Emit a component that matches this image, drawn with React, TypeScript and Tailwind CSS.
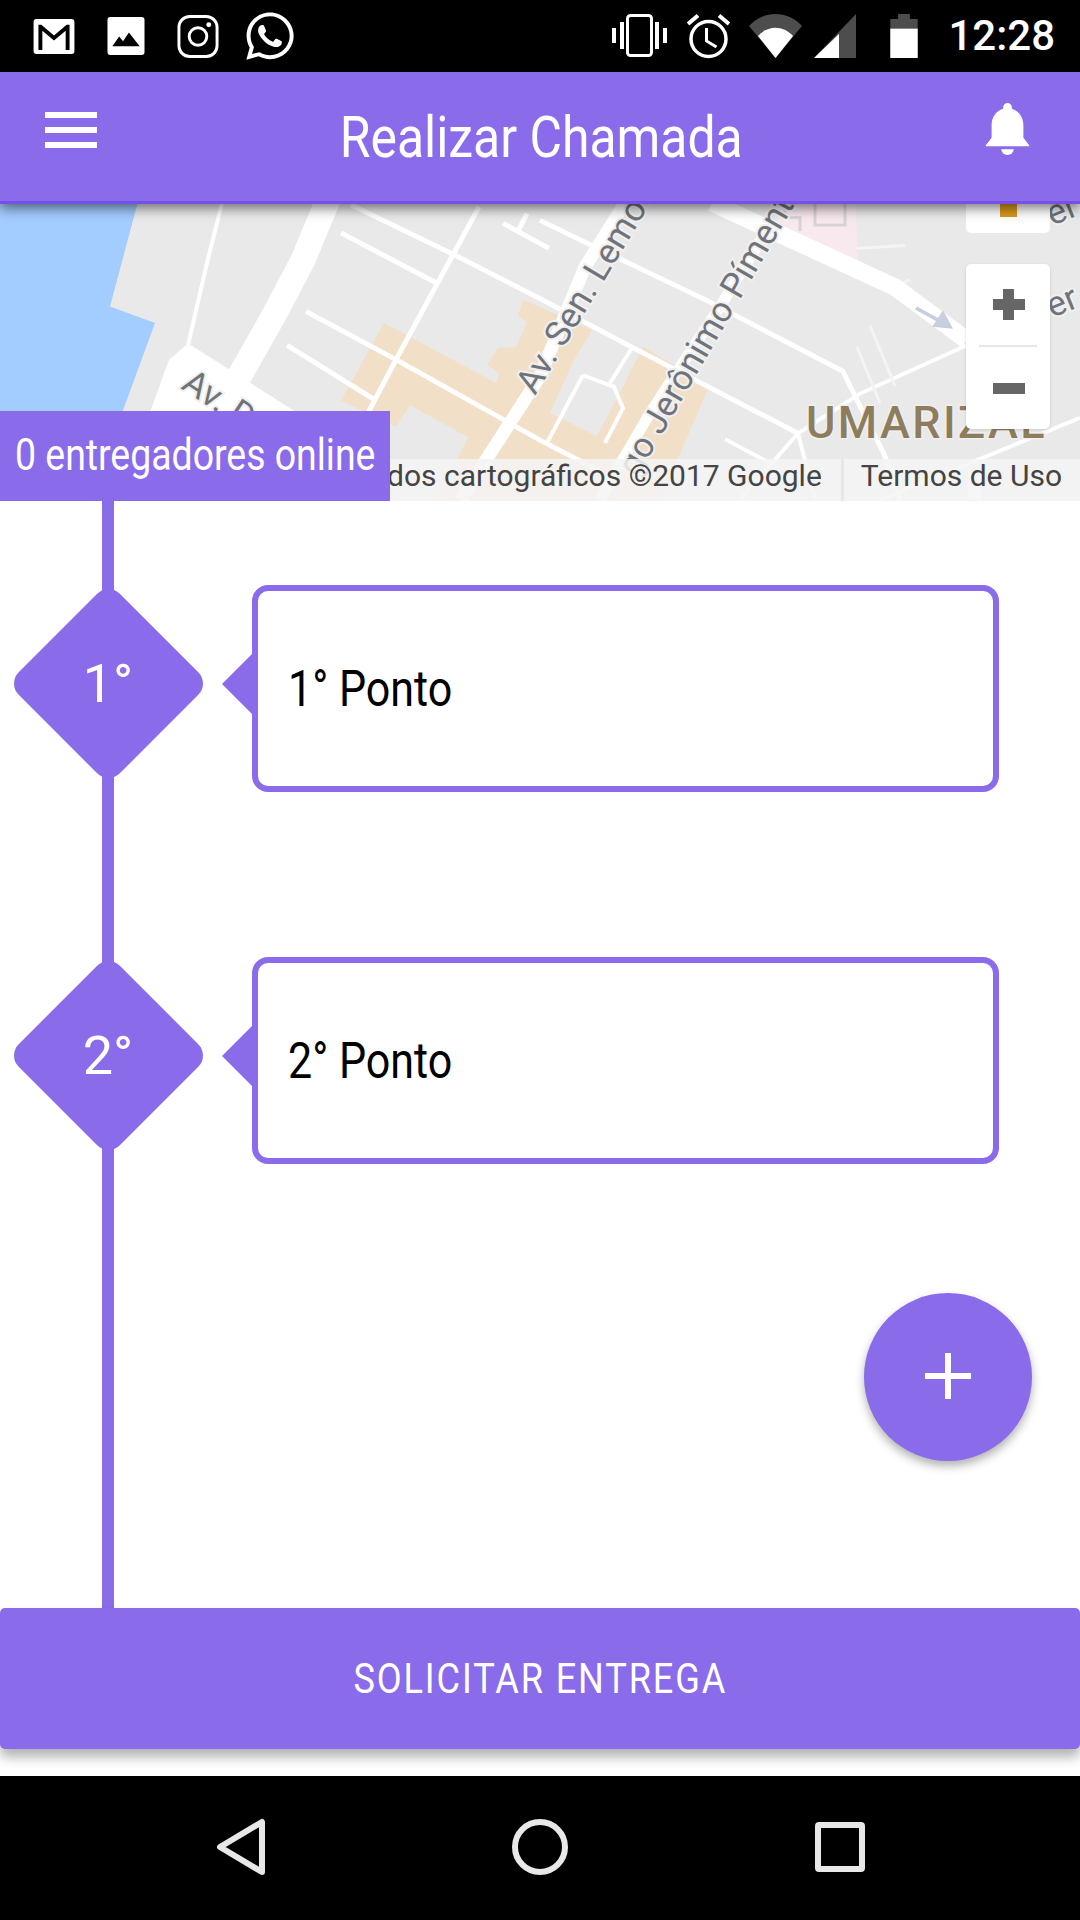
import { FaWhatsapp } from "react-icons/fa";

const ROBOTO = "font-['Roboto',sans-serif]";

function StatusLeft() {
  return (
    <div className="flex items-center">
      <svg className="ml-[33px]" width="42" height="35" viewBox="0 0 42 36">
        <rect width="42" height="36" rx="3" fill="#fff" />
        <path d="M5 32V6h3l13 11L34 6h3v26h-4V12L21 22 9 12v20z" fill="#000" />
      </svg>
      <svg className="ml-[32px]" width="38" height="38" viewBox="0 0 38 39">
        <rect width="38" height="39" rx="3" fill="#fff" />
        <path d="M5 30l7-10 4 5 6-9 11 14z" fill="#000" />
      </svg>
      <svg className="ml-[32px]" width="42" height="43" viewBox="0 0 42 44" fill="none" stroke="#fff">
        <rect x="1.500" y="1.500" width="39" height="41" rx="11" strokeWidth="3" />
        <circle cx="21" cy="22" r="9" strokeWidth="3" />
        <circle cx="32" cy="10" r="2.500" fill="#fff" stroke="none" />
      </svg>
      <FaWhatsapp className="ml-[24px] text-white" size={54} />
    </div>
  );
}

function StatusRight() {
  return (
    <div className="flex items-center">
      <svg width="55" height="44" viewBox="0 0 55 44" fill="#fff">
        <rect x="0" y="14" width="4" height="15" />
        <rect x="8" y="8" width="4" height="27" />
        <rect x="15.500" y="1.500" width="24" height="40" rx="3" fill="none" stroke="#fff" strokeWidth="3" />
        <rect x="43" y="8" width="4" height="27" />
        <rect x="51" y="14" width="4" height="15" />
      </svg>
      <svg className="ml-[20px]" width="43" height="46" viewBox="0 0 43 46" fill="none" stroke="#fff">
        <circle cx="21.500" cy="26" r="17.500" strokeWidth="3.500" />
        <path d="M19.500 15v13l10 6" strokeWidth="3" />
        <path d="M1 11L11 2.500M42 11L32 2.500" strokeWidth="4" />
      </svg>
      <svg className="ml-[19px]" width="53" height="44" viewBox="0 0 53 44">
        <path d="M0 12C14 -4 39 -4 53 12L26.500 44z" fill="#4d4d4d" />
        <path d="M9 22C19 11 34 11 44 22L26.500 44z" fill="#fff" />
      </svg>
      <svg className="ml-[12px]" width="42" height="44" viewBox="0 0 42 44">
        <path d="M42 0V44H0z" fill="#4d4d4d" />
        <path d="M25 20V44H0z" fill="#fff" />
      </svg>
      <svg className="ml-[34px]" width="28" height="44" viewBox="0 0 28 45">
        <path d="M8 0h12v5h8v40H0V5h8z" fill="#4d4d4d" />
        <rect y="15" width="28" height="30" fill="#fff" />
      </svg>
      <span className={`ml-[30px] mr-[25px] text-[42px] leading-none font-medium text-white ${ROBOTO}`}>12:28</span>
    </div>
  );
}

function MapCanvas() {
  const thin = { stroke: "#fff", strokeWidth: 5, fill: "none" };
  return (
    <svg className="block" width="1080" height="297" viewBox="0 204 1080 297">
      <rect x="0" y="204" width="1080" height="297" fill="#e9e9e9" />
      <g transform="translate(0 6.400) scale(1 0.968)">
        <path d="M0 190H141L110 310L155 327L122 420L100 510H0z" fill="#a3ccff" />
        <path d="M778 190H855L858 268L778 231z" fill="#f8e9ee" />
        <path d="M785 190V218H800V232M815 190V226H845V190" fill="none" stroke="#d8d4d6" strokeWidth="3" />
        <path
          d="M384 327L496 389L499 379L487 370L498 353L516 352L527 326L518 319L523 303L592 334L574 365L550 420L597 444L623 393L643 351L709 393L660 510H437L468 445L410 412L396 434L341 407z"
          fill="#f2dfc8"
        />
        <path d="M186 350L169 365L148 425H305L191 350z" fill="#fff" />
        <g {...thin}>
          <path d="M224 195L207 265L188 350" strokeWidth="4" />
          <path d="M341 234L437 286" />
          <path d="M351 205L455 257L540 302L630 351L798 441" />
          <path d="M306 315L396 365L540 448L600 480" />
          <path d="M287 350L374 406" />
          <path d="M479 207L396 365L368 420" />
          <path d="M503 224L549 250M527 214L518 232" />
          <path d="M540 221L588 245L705 303L843 377L860 413L884 462L900 510" />
          <path d="M583 381L547 451M583 381L614 393L623 415L605 451M633 351L610 389" strokeWidth="4" />
          <path d="M798 441L860 400L967 350" strokeWidth="4" />
          <path d="M798 441L740 510M798 441L815 510M725 447L770 472" strokeWidth="4" />
          <path d="M880 510L1080 425" strokeWidth="4" />
          <path d="M857 250L905 247M890 292L910 282M857 352L880 410M870 330L895 392" stroke="#f4f4f4" strokeWidth="3" />
        </g>
        <path d="M330 195L303 262L275 317L235 390" fill="none" stroke="#fff" strokeWidth="25" />
        <path d="M540 382L482 475L461 510M540 382L585 269L630 195" fill="none" stroke="#fff" strokeWidth="13" />
        <path d="M771 224L722 307L650 420L619 475L600 510" fill="none" stroke="#fff" strokeWidth="11" />
        <path d="M712 203L771 231L895 290L967 345" fill="none" stroke="#fff" strokeWidth="18" />
        <path d="M917 310L938 322L943 314L953 333L932 331L936 325L915 313z" fill="#c8cde0" />
        <path d="M975 480V510" stroke="#fff" strokeWidth="14" />
      </g>
      <g className={ROBOTO} fontSize="35" fill="#70747a" stroke="#f0f0f0" strokeWidth="4" style={{ paintOrder: "stroke" }}>
        <text transform="translate(535 396) rotate(-59)">Av. Sen. Lemos</text>
        <text transform="translate(637 478) rotate(-60)">go Jerônimo Pímentel</text>
        <text transform="translate(180 388) rotate(33)">Av. Dom</text>
        <text transform="translate(1052 226) rotate(-22)">er</text>
        <text transform="translate(1052 318) rotate(-22)">er</text>
      </g>
      <text
        x="806"
        y="438"
        fontSize="45"
        fontWeight="500"
        letterSpacing="2.400"
        fill="#8e7d5c"
        stroke="#efefef"
        strokeWidth="3"
        className={ROBOTO}
        style={{ paintOrder: "stroke" }}
      >
        UMARIZAL
      </text>
    </svg>
  );
}

function Row({ n }: { n: string }) {
  return (
    <div className="flex items-center">
      <div className="flex w-[216px] -translate-y-[5px] items-center justify-center">
        <div className="flex size-[143px] rotate-45 items-center justify-center rounded-2xl bg-[#8a6ceb]">
          <span className={`-rotate-45 text-[54px] leading-none text-white ${ROBOTO}`}>{n}</span>
        </div>
      </div>
      <div className="ml-[6px] h-0 w-0 -translate-y-[5px] border-y-[30px] border-r-[30px] border-y-transparent border-r-[#8a6ceb]" />
      <div className="flex h-[207px] w-[747px] items-center rounded-2xl border-[6px] border-[#8a6ceb] bg-white pl-[30px]">
        <span className={`inline-block origin-left scale-x-[0.86] whitespace-nowrap text-[50px] leading-none text-black ${ROBOTO}`}>{n} Ponto</span>
      </div>
    </div>
  );
}

export default function App() {
  return (
    <div className="flex h-[1920px] w-[1080px] flex-col overflow-hidden bg-white">
      <div className="flex h-[72px] shrink-0 items-center justify-between bg-black">
        <StatusLeft />
        <StatusRight />
      </div>

      <header className="relative z-10 flex h-[132px] shrink-0 items-center justify-between border-b-[3px] border-[#7650e8] bg-[#8a6ceb] shadow-[0_4px_12px_rgba(0,0,0,0.55)]">
        <div className="mb-[14px] ml-[45px] flex w-[52px] flex-col gap-[9px]">
          <div className="h-[6px] bg-white" />
          <div className="h-[6px] bg-white" />
          <div className="h-[6px] bg-white" />
        </div>
        <span className={`inline-block scale-x-[0.86] whitespace-nowrap text-[58px] leading-none text-white ${ROBOTO}`}>Realizar Chamada</span>
        <svg className="mb-[16px] mr-[50px]" width="45" height="52" viewBox="0 0 45 54" fill="#fff">
          <path d="M22.500 0a4.500 4.500 0 0 1 4.500 4.500v1.500C35 8.500 39 15.500 39 23v13l6 8v1H0v-1l6-8V23C6 15.500 10 8.500 18 6V4.500A4.500 4.500 0 0 1 22.500 0z" />
          <path d="M16 48h13a6.500 6 0 0 1-13 0z" />
        </svg>
      </header>

      <section className="relative h-[297px] shrink-0">
        <MapCanvas />
        <div className="absolute left-[966px] top-[-30px] h-[59px] w-[84px] rounded-[5px] bg-white">
          <div className="ml-[34px] h-[43px] w-[17px] bg-[#d99a1c]" />
        </div>
        <div className="absolute left-[966px] top-[60px] flex h-[165px] w-[84px] flex-col items-center rounded-[5px] bg-white shadow-[0_1px_3px_rgba(0,0,0,0.15)]">
          <div className="relative h-[81px] w-full">
            <div className="absolute left-[27px] top-[35px] h-[11px] w-[32px] bg-[#666]" />
            <div className="absolute left-[37px] top-[25px] h-[31px] w-[11px] bg-[#666]" />
          </div>
          <div className="h-[2px] w-[58px] bg-[#e6e6e6]" />
          <div className="ml-[2px] mt-[36px] h-[11px] w-[32px] bg-[#666]" />
        </div>
        <div className={`absolute bottom-0 right-0 flex h-[42px] w-[780px] items-center justify-end bg-[#f5f5f5]/85 text-[30px] leading-none text-[#444] ${ROBOTO}`}>
          <span className="whitespace-nowrap pb-[8px] pr-[19px]">Dados cartográficos ©2017 Google</span>
          <span className="h-full w-[3px] bg-[#e6e6e6]" />
          <span className="whitespace-nowrap pb-[8px] pl-[17px] pr-[18px]">Termos de Uso</span>
        </div>
        <div className="absolute bottom-0 left-0 flex h-[90px] w-[390px] items-center bg-[#8a6ceb] pl-[15px]">
          <span className={`inline-block origin-left scale-x-[0.86] whitespace-nowrap text-[43.500px] leading-none text-white ${ROBOTO}`}>0 entregadores online</span>
        </div>
      </section>

      <main className="relative flex-1">
        <div className="absolute bottom-0 left-[102px] top-0 w-3 bg-[#8a6ceb]" />
        <div className="relative flex flex-col gap-[165px] pt-[84px]">
          <Row n="1°" />
          <Row n="2°" />
        </div>
        <button className="absolute bottom-[147px] right-[48px] flex size-[168px] items-center justify-center rounded-full bg-[#8a6ceb] shadow-[0_5px_10px_rgba(0,0,0,0.3)]">
          <svg className="mb-[3px]" width="46" height="46" viewBox="0 0 46 46" fill="#fff">
            <rect x="20" width="6" height="46" />
            <rect y="20" width="46" height="6" />
          </svg>
        </button>
      </main>

      <button className="relative flex h-[141px] shrink-0 items-center justify-center rounded-[5px] bg-[#8a6ceb] shadow-[0_8px_12px_rgba(0,0,0,0.3)]">
        <span className={`inline-block scale-x-[0.86] whitespace-nowrap text-[42px] uppercase leading-none tracking-[2.200px] text-white ${ROBOTO}`}>Solicitar Entrega</span>
      </button>
      <div className="h-[27px] shrink-0 bg-white" />

      <nav className="relative flex h-[144px] shrink-0 items-center bg-black">
        <svg className="mb-[2px] ml-[216px]" width="50" height="58" viewBox="0 0 50 58" fill="none" stroke="#e8e8e8" strokeWidth="6" strokeLinejoin="round">
          <path d="M46 4V54L4 29z" />
        </svg>
        <svg className="mb-[2px] ml-[246px]" width="56" height="56" viewBox="0 0 56 56" fill="none" stroke="#e8e8e8" strokeWidth="6">
          <circle cx="28" cy="28" r="25" />
        </svg>
        <svg className="mb-[2px] ml-[247px]" width="50" height="50" viewBox="0 0 50 50" fill="none" stroke="#e8e8e8" strokeWidth="6" strokeLinejoin="round">
          <rect x="3" y="3" width="44" height="44" rx="1" />
        </svg>
      </nav>
    </div>
  );
}
